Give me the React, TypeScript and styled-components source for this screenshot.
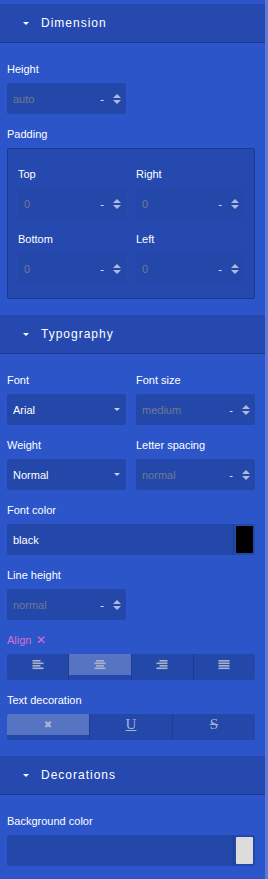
import React from "react";
import styled, { createGlobalStyle } from "styled-components";

const GlobalStyle = createGlobalStyle`
  html, body {
    margin: 0;
    padding: 0;
    background: #2b55c8;
  }
  body {
    font-family: "Liberation Sans", Arial, sans-serif;
  }
`;

const BG = "#2b55c8";
const FIELD = "#2448aa";
const DARK_LINE = "#1c3990";

const Page = styled.div`
  display: flex;
  width: 268px;
  min-height: 879px;
  background: ${BG};
`;

const Panel = styled.div`
  width: 265px;
  padding-top: 4px;
`;

const ScrollTrack = styled.div`
  width: 3px;
  background: #5f78d6;
`;

const SectorTitle = styled.div`
  display: flex;
  align-items: center;
  height: 38px;
  padding-left: 23px;
  background: #2549ae;
  border-bottom: 1px solid ${DARK_LINE};
  color: #fff;
  font-size: 12px;
  letter-spacing: 1px;
`;

const Caret = styled.span`
  width: 0;
  height: 0;
  margin-right: 12px;
  border-left: 3px solid transparent;
  border-right: 3px solid transparent;
  border-top: 3px solid #fff;
`;

const Properties = styled.div<{ $inner?: boolean }>`
  display: grid;
  grid-template-columns: ${(p) => (p.$inner ? "108px 108px" : "119px 119px")};
  column-gap: 10px;
  row-gap: 13px;
  padding: ${(p) => (p.$inner ? "18px 10px 14px 10px" : "19px 10px 16px 7px")};
`;

const Property = styled.div<{ $full?: boolean }>`
  grid-column: ${(p) => (p.$full ? "1 / -1" : "auto")};
`;

const Label = styled.div<{ $accent?: boolean }>`
  height: 14px;
  line-height: 14px;
  margin-bottom: 7px;
  font-size: 11px;
  color: ${(p) => (p.$accent ? "#d96fd6" : "#fff")};
  display: flex;
  align-items: center;
  gap: 5px;
`;

const Field = styled.div`
  display: flex;
  align-items: center;
  height: 31px;
  border-radius: 2px;
  background: ${FIELD};
  font-size: 11px;
  box-sizing: border-box;
`;

const FieldText = styled.span<{ $muted?: boolean }>`
  flex: 1;
  padding-left: 6px;
  color: ${(p) => (p.$muted ? "#6f7894" : "#fff")};
`;

const Unit = styled.span`
  color: #e8ecf8;
  margin-right: 9px;
`;

const Arrows = styled.span`
  display: flex;
  flex-direction: column;
  gap: 2px;
  margin-right: 5px;
`;

const Arrow = styled.span<{ $up?: boolean }>`
  width: 0;
  height: 0;
  border-left: 4px solid transparent;
  border-right: 4px solid transparent;
  ${(p) =>
    p.$up ? "border-bottom: 4px solid #aebadb;" : "border-top: 4px solid #aebadb;"}
`;

const SelectCaret = styled.span`
  width: 0;
  height: 0;
  margin-right: 6px;
  border-left: 3.5px solid transparent;
  border-right: 3.5px solid transparent;
  border-top: 3.5px solid #c9d1ea;
`;

const SwatchWrap = styled.div`
  display: flex;
  align-items: center;
  height: 100%;
  padding: 0 2px;
  border-left: 1px solid #1d3c95;
`;

const Swatch = styled.div<{ $color: string }>`
  width: 17px;
  height: 27px;
  border-radius: 1px;
  background: ${(p) => p.$color};
`;

const CompositeBox = styled.div`
  background: #2549ae;
  border: 1px solid ${DARK_LINE};
  border-radius: 2px;
`;

const SegmentRow = styled.div`
  display: flex;
  height: 26px;
  border-radius: 2px;
  background: ${FIELD};
  overflow: hidden;
`;

const Segment = styled.div`
  flex: 1;
  display: flex;
  align-items: flex-start;
  & + & {
    border-left: 1px solid #1d3c95;
  }
`;

const SegmentFace = styled.div<{ $active?: boolean }>`
  width: 100%;
  height: 21px;
  display: flex;
  align-items: center;
  justify-content: center;
  background: ${(p) => (p.$active ? "#5774c2" : "transparent")};
`;

const DecoGlyph = styled.span<{ $kind: "none" | "u" | "s" }>`
  font-family: ${(p) =>
    p.$kind === "none" ? '"DejaVu Sans", sans-serif' : '"Liberation Serif", "Times New Roman", serif'};
  font-size: ${(p) => (p.$kind === "none" ? "10px" : "15px")};
  font-weight: ${(p) => (p.$kind === "none" ? "bold" : "normal")};
  color: #a9b3cc;
  text-decoration: ${(p) =>
    p.$kind === "u" ? "underline" : p.$kind === "s" ? "line-through" : "none"};
`;

function NumberField({ value }: { value: string }) {
  return (
    <Field>
      <FieldText $muted>{value}</FieldText>
      <Unit>-</Unit>
      <Arrows>
        <Arrow $up />
        <Arrow />
      </Arrows>
    </Field>
  );
}

function SelectField({ value }: { value: string }) {
  return (
    <Field>
      <FieldText>{value}</FieldText>
      <SelectCaret />
    </Field>
  );
}

function ColorField({ value, color }: { value: string; color: string }) {
  return (
    <Field>
      <FieldText>{value}</FieldText>
      <SwatchWrap>
        <Swatch $color={color} />
      </SwatchWrap>
    </Field>
  );
}

type AlignMode = "left" | "center" | "right" | "justify";

function AlignIcon({ mode }: { mode: AlignMode }) {
  const rows = [8, 11, 8, 11];
  return (
    <svg width="12" height="10" viewBox="0 0 12 10">
      {rows.map((w, i) => {
        const width = mode === "justify" ? 11 : w;
        const x =
          mode === "left" || mode === "justify"
            ? 0.5
            : mode === "right"
            ? 11.5 - width
            : (12 - width) / 2;
        return <rect key={i} x={x} y={i * 2.5} width={width} height={1.6} fill="#a9b3cc" />;
      })}
    </svg>
  );
}

function Sector({ title, children }: { title: string; children: React.ReactNode }) {
  return (
    <div>
      <SectorTitle>
        <Caret />
        {title}
      </SectorTitle>
      {children}
    </div>
  );
}

export default function App() {
  const aligns: AlignMode[] = ["left", "center", "right", "justify"];
  return (
    <Page>
      <GlobalStyle />
      <Panel>
        <Sector title="Dimension">
          <Properties>
            <Property>
              <Label>Height</Label>
              <NumberField value="auto" />
            </Property>
            <Property $full>
              <Label>Padding</Label>
              <CompositeBox>
                <Properties $inner>
                  <Property>
                    <Label>Top</Label>
                    <NumberField value="0" />
                  </Property>
                  <Property>
                    <Label>Right</Label>
                    <NumberField value="0" />
                  </Property>
                  <Property>
                    <Label>Bottom</Label>
                    <NumberField value="0" />
                  </Property>
                  <Property>
                    <Label>Left</Label>
                    <NumberField value="0" />
                  </Property>
                </Properties>
              </CompositeBox>
            </Property>
          </Properties>
        </Sector>
        <Sector title="Typography">
          <Properties>
            <Property>
              <Label>Font</Label>
              <SelectField value="Arial" />
            </Property>
            <Property>
              <Label>Font size</Label>
              <NumberField value="medium" />
            </Property>
            <Property>
              <Label>Weight</Label>
              <SelectField value="Normal" />
            </Property>
            <Property>
              <Label>Letter spacing</Label>
              <NumberField value="normal" />
            </Property>
            <Property $full>
              <Label>Font color</Label>
              <ColorField value="black" color="#000" />
            </Property>
            <Property>
              <Label>Line height</Label>
              <NumberField value="normal" />
            </Property>
            <Property $full>
              <Label $accent>
                Align <span style={{ fontSize: 12 }}>✕</span>
              </Label>
              <SegmentRow>
                {aligns.map((a) => (
                  <Segment key={a}>
                    <SegmentFace $active={a === "center"}>
                      <AlignIcon mode={a} />
                    </SegmentFace>
                  </Segment>
                ))}
              </SegmentRow>
            </Property>
            <Property $full>
              <Label>Text decoration</Label>
              <SegmentRow>
                <Segment>
                  <SegmentFace $active>
                    <DecoGlyph $kind="none">✖</DecoGlyph>
                  </SegmentFace>
                </Segment>
                <Segment>
                  <SegmentFace>
                    <DecoGlyph $kind="u">U</DecoGlyph>
                  </SegmentFace>
                </Segment>
                <Segment>
                  <SegmentFace>
                    <DecoGlyph $kind="s">S</DecoGlyph>
                  </SegmentFace>
                </Segment>
              </SegmentRow>
            </Property>
          </Properties>
        </Sector>
        <Sector title="Decorations">
          <Properties>
            <Property $full>
              <Label>Background color</Label>
              <ColorField value="" color="#dcdcdc" />
            </Property>
          </Properties>
        </Sector>
      </Panel>
      <ScrollTrack />
    </Page>
  );
}
